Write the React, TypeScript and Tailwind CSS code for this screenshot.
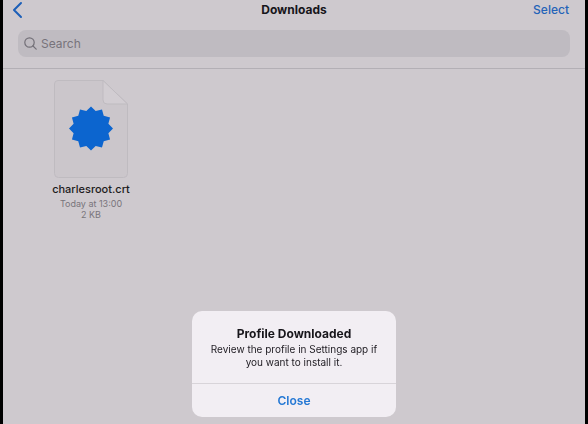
import React from "react";

const SEAL_POINTS = Array.from({ length: 24 }, (_, i) => {
  const radius = i % 2 === 0 ? 22 : 18;
  const angle = (i * Math.PI) / 12 - Math.PI / 2;
  return `${(37 + radius * Math.cos(angle)).toFixed(2)},${(48.5 + radius * Math.sin(angle)).toFixed(2)}`;
}).join(" ");

function FileIcon() {
  return (
    <svg width="74" height="98" viewBox="0 0 74 98" aria-hidden="true">
      <path
        d="M4 .5H49L73.500 24V93.500Q73.500 97.500 69.500 97.500H4.500Q.5 97.500 .5 93.500V4Q.5 .5 4 .5Z"
        fill="#cbc6cb"
        stroke="#bfbbc0"
      />
      <path d="M49 .5V20Q49 24 53 24H73.500Z" fill="#d2cdd2" stroke="#bfbbc0" />
      <polygon points={SEAL_POINTS} fill="#0c65cf" />
    </svg>
  );
}

function Header() {
  return (
    <header className="border-b border-[#b3afb5] pb-[11px]">
      <div className="grid h-5 grid-cols-[1fr_auto_1fr] items-center px-2">
        <button type="button" aria-label="Back" className="justify-self-start">
          <svg width="12" height="18" viewBox="0 0 12 18" fill="none" aria-hidden="true">
            <path
              d="M10 2L3 9L10 16"
              stroke="#1c5fb8"
              strokeWidth="2"
              strokeLinecap="round"
              strokeLinejoin="round"
            />
          </svg>
        </button>
        <h1 className="text-[12px] leading-5 font-bold text-[#17151a]">Downloads</h1>
        <button type="button" className="justify-self-end px-2 text-[12px] leading-5 font-medium text-[#2463b8]">
          Select
        </button>
      </div>
      <label className="mx-[15px] mt-[10px] flex h-[27px] items-center gap-1 rounded-lg bg-[#bfbbc1] pl-[6px]">
        <svg width="13" height="13" viewBox="0 0 13 13" fill="none" stroke="#737078" strokeWidth="1.200" strokeLinecap="round" aria-hidden="true">
          <circle cx="5.500" cy="5.500" r="4.700" />
          <path d="M9 9L12.200 12.200" />
        </svg>
        <input
          type="search"
          aria-label="Search"
          placeholder="Search"
          className="min-w-0 flex-1 bg-transparent text-[12px] leading-5 text-[#17151a] outline-none placeholder:text-[#77737b]"
        />
      </label>
    </header>
  );
}

export default function App() {
  return (
    <div className="min-h-screen border-x-[3px] border-black bg-[#cec9ce] font-['Inter','Liberation_Sans',sans-serif]">
      <Header />
      <main className="px-8 pt-[11px]">
        <figure className="flex w-28 flex-col items-center text-center">
          <FileIcon />
          <figcaption className="pt-[3px]">
            <p className="text-[11px] leading-4 font-medium text-[#1d1b20]">charlesroot.crt</p>
            <p className="pt-px text-[9px] leading-[11px] text-[#79757c]">Today at 13:00</p>
            <p className="text-[9px] leading-[11px] text-[#79757c]">2 KB</p>
          </figcaption>
        </figure>
      </main>
      <div className="fixed inset-x-0 bottom-[7px] flex justify-center">
        <div
          role="alertdialog"
          aria-labelledby="alert-title"
          aria-describedby="alert-text"
          className="w-[204px] overflow-hidden rounded-[10px] bg-[#f2eef3] text-center"
        >
          <div className="px-4 pt-[14px] pb-[14px]">
            <h2 id="alert-title" className="text-[12px] leading-[18px] font-bold text-[#17151a]">
              Profile Downloaded
            </h2>
            <p id="alert-text" className="text-[10px] leading-[13px] text-[#242127]">
              Review the profile in Settings app if you want to install it.
            </p>
          </div>
          <button
            type="button"
            className="h-[34px] w-full border-t border-[#d8d4d9] text-[12px] leading-5 font-semibold text-[#2478d4]"
          >
            Close
          </button>
        </div>
      </div>
    </div>
  );
}
